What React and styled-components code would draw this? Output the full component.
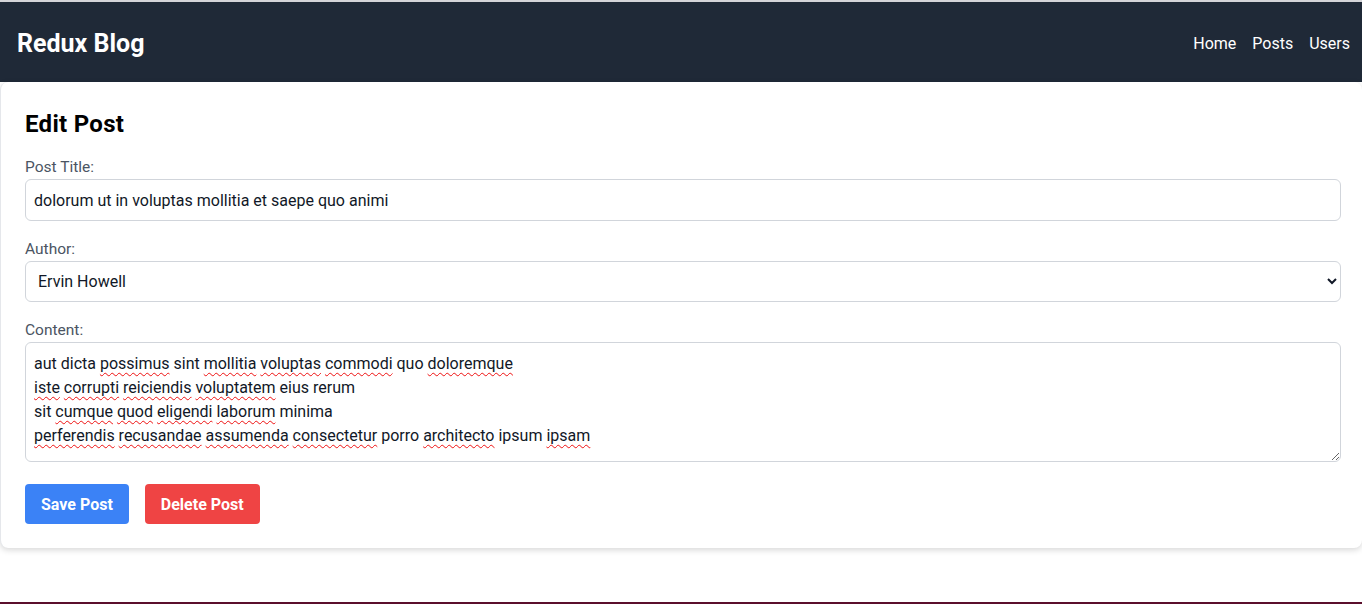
import React, { useState } from 'react';
import styled, { createGlobalStyle } from 'styled-components';

const GlobalStyle = createGlobalStyle`
  * { box-sizing: border-box; }
  html, body { margin: 0; padding: 0; background: #ffffff; }
  body {
    font-family: Roboto, "Liberation Sans", sans-serif;
    color: #111827;
  }
`;

const Page = styled.div`
  min-height: 604px;
  display: flex;
  flex-direction: column;
  border-top: 2px solid #d4d4d8;
  border-bottom: 2px solid #5b0f2c;
`;

const Navbar = styled.header`
  height: 80px;
  background: #1f2937;
  display: flex;
  align-items: center;
  justify-content: space-between;
  padding: 2px 12px 0 17px;
`;

const Brand = styled.h1`
  margin: 0;
  color: #ffffff;
  font-size: 25px;
  font-weight: 700;
`;

const NavLinks = styled.nav`
  display: flex;
  gap: 16px;
`;

const NavLink = styled.a`
  color: #ffffff;
  font-size: 16px;
  text-decoration: none;
  cursor: pointer;
`;

const Card = styled.section`
  background: #ffffff;
  border-radius: 8px;
  box-shadow: 0 2px 6px rgba(0, 0, 0, 0.16);
  padding: 24px 21px 24px 24px;
  border-left: 1px solid #e5e7eb;
`;

const Title = styled.h2`
  margin: 0 0 14px;
  font-size: 24px;
  font-weight: 700;
  line-height: 36px;
  letter-spacing: 0.3px;
  color: #000000;
`;

const Form = styled.form`
  display: flex;
  flex-direction: column;
`;

const Label = styled.label`
  display: block;
  color: #4b5563;
  font-size: 15.5px;
  line-height: 22px;
  margin-bottom: 1px;
`;

const Field = styled.div`
  margin-bottom: 17px;
`;

const inputBase = `
  width: 100%;
  border: 1px solid #d1d5db;
  border-radius: 6px;
  font-family: inherit;
  font-size: 16px;
  color: #111827;
  background: #ffffff;
  outline: none;
`;

const TextInput = styled.input`
  ${inputBase}
  height: 42px;
  padding: 0 8px;
`;

const Select = styled.select`
  ${inputBase}
  height: 41px;
  padding: 0 8px;
`;

const AreaWrap = styled.div`
  position: relative;
`;

const TextArea = styled.textarea`
  ${inputBase}
  display: block;
  height: 120px;
  padding: 9px 8px 8px;
  line-height: 24px;
  resize: vertical;
`;

const SpellLayer = styled.div`
  position: absolute;
  inset: 1px;
  padding: 9px 8px 8px;
  font-size: 16px;
  line-height: 24px;
  color: transparent;
  white-space: pre-wrap;
  pointer-events: none;
`;

const Miss = styled.span`
  text-decoration: underline wavy #ee1111;
  text-decoration-thickness: 1px;
  text-underline-offset: 3px;
`;

const Actions = styled.div`
  display: flex;
  gap: 16px;
  margin-top: 5px;
`;

const Button = styled.button`
  height: 40px;
  padding: 0 16px;
  border: none;
  border-radius: 4px;
  color: #ffffff;
  font-family: inherit;
  font-size: 16px;
  font-weight: 700;
  cursor: pointer;
  background: ${(p) => (p.$danger ? '#ef4444' : '#3b82f6')};
`;

const Spacer = styled.div`
  flex: 1;
`;

const contentLines = [
  'aut dicta possimus sint mollitia voluptas commodi quo doloremque',
  'iste corrupti reiciendis voluptatem eius rerum',
  'sit cumque quod eligendi laborum minima',
  'perferendis recusandae assumenda consectetur porro architecto ipsum ipsam',
];

const flagged = new Set([
  'possimus', 'mollitia', 'voluptas', 'commodi', 'doloremque',
  'iste', 'corrupti', 'reiciendis', 'voluptatem',
  'cumque', 'quod', 'eligendi', 'laborum',
  'perferendis', 'recusandae', 'assumenda', 'consectetur', 'architecto', 'ipsam',
]);

const users = ['Leanne Graham', 'Ervin Howell', 'Clementine Bauch', 'Patricia Lebsack'];

export default function App() {
  const [title, setTitle] = useState('dolorum ut in voluptas mollitia et saepe quo animi');
  const [author, setAuthor] = useState('Ervin Howell');
  const [content, setContent] = useState(contentLines.join('\n'));

  // mirror of the textarea text, used only to paint the spell-check squiggles
  const renderSpell = () =>
    content.split('\n').map((line, i) => (
      <React.Fragment key={i}>
        {line.split(' ').map((w, j) => (
          <React.Fragment key={j}>
            {j > 0 && ' '}
            {flagged.has(w) ? <Miss>{w}</Miss> : w}
          </React.Fragment>
        ))}
        {'\n'}
      </React.Fragment>
    ));

  return (
    <Page>
      <GlobalStyle />
      <Navbar>
        <Brand>Redux Blog</Brand>
        <NavLinks>
          <NavLink>Home</NavLink>
          <NavLink>Posts</NavLink>
          <NavLink>Users</NavLink>
        </NavLinks>
      </Navbar>
      <Card>
        <Title>Edit Post</Title>
        <Form onSubmit={(e) => e.preventDefault()}>
          <Field>
            <Label htmlFor="postTitle">Post Title:</Label>
            <TextInput id="postTitle" value={title} onChange={(e) => setTitle(e.target.value)} />
          </Field>
          <Field>
            <Label htmlFor="postAuthor">Author:</Label>
            <Select id="postAuthor" value={author} onChange={(e) => setAuthor(e.target.value)}>
              {users.map((u) => (
                <option key={u} value={u}>{u}</option>
              ))}
            </Select>
          </Field>
          <Field>
            <Label htmlFor="postContent">Content:</Label>
            <AreaWrap>
              <TextArea
                id="postContent"
                spellCheck={false}
                value={content}
                onChange={(e) => setContent(e.target.value)}
              />
              <SpellLayer aria-hidden="true">{renderSpell()}</SpellLayer>
            </AreaWrap>
          </Field>
          <Actions>
            <Button type="button">Save Post</Button>
            <Button type="button" $danger>Delete Post</Button>
          </Actions>
        </Form>
      </Card>
      <Spacer />
    </Page>
  );
}
